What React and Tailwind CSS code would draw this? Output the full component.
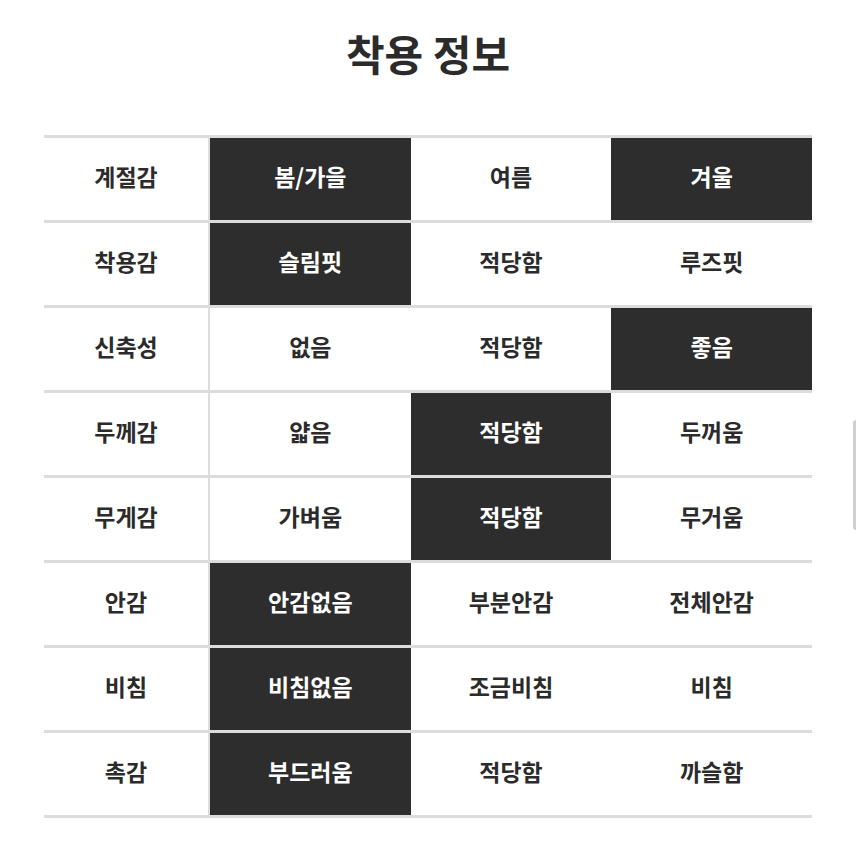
const rows = [
  { label: '계절감', options: ['봄/가을', '여름', '겨울'], active: [0, 2] },
  { label: '착용감', options: ['슬림핏', '적당함', '루즈핏'], active: [0] },
  { label: '신축성', options: ['없음', '적당함', '좋음'], active: [2] },
  { label: '두께감', options: ['얇음', '적당함', '두꺼움'], active: [1] },
  { label: '무게감', options: ['가벼움', '적당함', '무거움'], active: [1] },
  { label: '안감', options: ['안감없음', '부분안감', '전체안감'], active: [0] },
  { label: '비침', options: ['비침없음', '조금비침', '비침'], active: [0] },
  { label: '촉감', options: ['부드러움', '적당함', '까슬함'], active: [0] },
];

const App = () => {
  return (
    <div
      className="relative w-[856px] h-[856px] bg-white overflow-hidden"
      style={{ fontFamily: '"Noto Sans CJK KR", "Noto Sans", sans-serif' }}
    >
      <h1 className="pt-[23px] h-[135px] text-center text-[42px] leading-[60px] font-bold text-[#2b2b2b]">
        착용 정보
      </h1>

      <div className="mx-[44px] w-[768px] border-b-[3px] border-[#dcdcdc]">
        {rows.map(row => (
          <div
            key={row.label}
            className="grid grid-cols-[166px_1fr_1fr_1fr] h-[85px] border-t-[3px] border-[#dcdcdc]"
          >
            <div className="flex items-center justify-center pb-[5px] border-r-2 border-[#dcdcdc] text-[23px] font-bold text-[#2b2b2b]">
              {row.label}
            </div>
            {row.options.map((opt, i) => {
              const on = row.active.includes(i);
              return (
                <div
                  key={opt + i}
                  className={
                    on
                      ? 'flex items-center justify-center pb-[5px] bg-[#2d2d2d] text-white text-[23px] font-bold'
                      : 'flex items-center justify-center pb-[5px] bg-white text-[#2b2b2b] text-[23px] font-bold'
                  }
                >
                  {opt}
                </div>
              );
            })}
          </div>
        ))}
      </div>

      <div className="absolute right-0 top-[420px] w-[3px] h-[110px] bg-[#d0d0d0] rounded-l" />
    </div>
  );
};

export default App;
